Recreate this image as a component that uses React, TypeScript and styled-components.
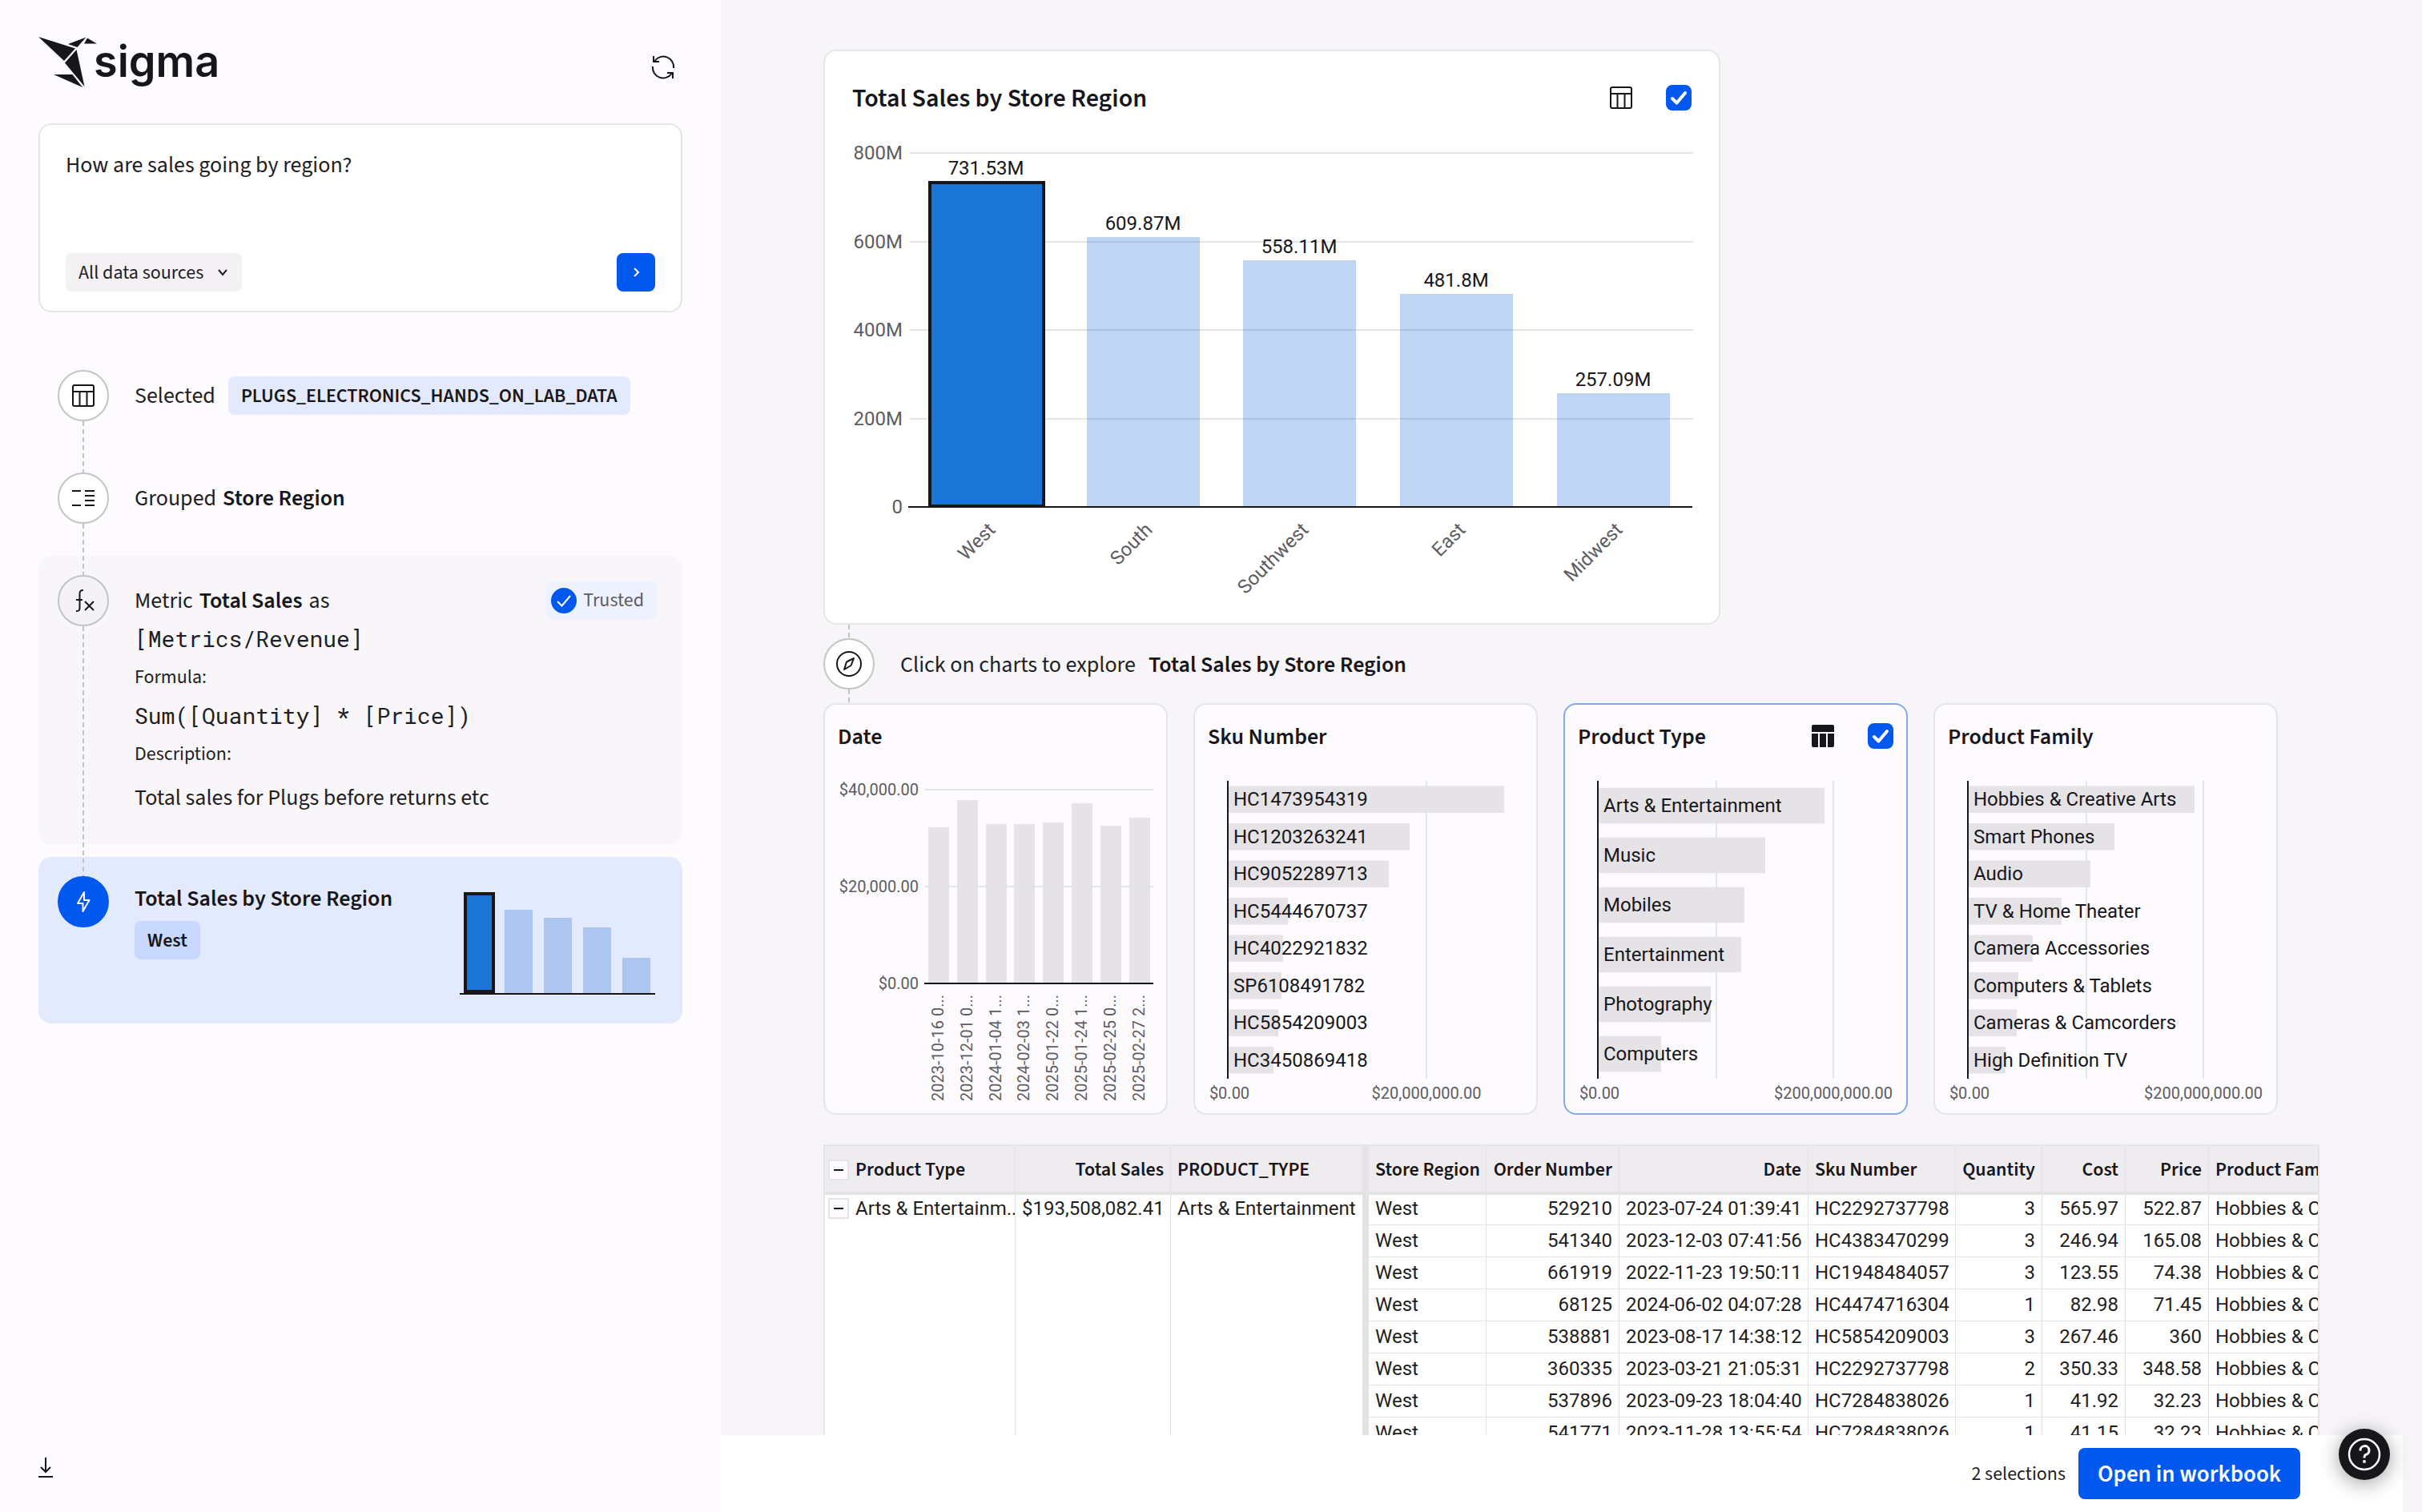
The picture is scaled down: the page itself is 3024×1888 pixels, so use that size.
import React from 'react';
import styled, { createGlobalStyle, css } from 'styled-components';

const color = {
  ink: '#17161a',
  text: '#1f1e22',
  muted: '#5d5c61',
  line: '#e5e4e7',
  rail: '#c4c3c6',
  blue: '#0058ee',
  bar: '#1b75d6',
  barMuted: '#1e69d4',
  sidebar: '#fdfbfe',
  canvas: '#f7f5f8',
};

const ui = '"Source Sans 3", "Noto Sans CJK SC", "Noto Sans", sans-serif';
const data = 'Roboto, "Liberation Sans", sans-serif';
const mono = '"Roboto Mono", "Liberation Mono", monospace';

const GlobalStyle = createGlobalStyle`
  * { box-sizing: border-box; }
  body { margin: 0; background: ${color.canvas}; color: ${color.text}; font-family: ${ui}; font-size: 28px; }
  button, select, textarea, input { font: inherit; color: inherit; margin: 0; }
  p, h1, h2, h3, ol { margin: 0; padding: 0; font-weight: 400; }
  svg { display: block; flex: none; }
`;

/* ---------- page frame ---------- */

const Page = styled.div`
  display: flex;
  height: 100vh;
  overflow: hidden;
`;

const Sidebar = styled.aside`
  display: flex;
  flex-direction: column;
  flex: 0 0 900px;
  padding: 44px 48px 40px;
  background: ${color.sidebar};
`;

const Main = styled.main`
  display: flex;
  flex: 1;
  flex-direction: column;
  min-width: 0;
`;

const Canvas = styled.div`
  flex: 1;
  min-height: 0;
  padding: 62px 128px 0;
  overflow-x: hidden;
  overflow-y: auto;
  scrollbar-width: none;
`;

const Footer = styled.footer`
  display: flex;
  flex: none;
  align-items: center;
  justify-content: flex-end;
  gap: 16px;
  height: 96px;
  margin-right: 24px;
  padding-right: 128px;
  background: #ffffff;
  font-size: 24px;
`;

const PrimaryButton = styled.button`
  height: 64px;
  padding: 2px 24px 0;
  border: 0;
  border-radius: 8px;
  background: ${color.blue};
  color: #ffffff;
  font-size: 29px;
  font-weight: 600;
  line-height: 36px;
`;

const HelpButton = styled.button`
  position: fixed;
  right: 40px;
  bottom: 40px;
  display: grid;
  place-items: center;
  width: 64px;
  height: 64px;
  padding: 0;
  border: 0;
  border-radius: 50%;
  background: ${color.ink};
  color: #ffffff;
  box-shadow: 0 4px 24px rgba(20, 18, 24, 0.4);
`;

/* ---------- sidebar ---------- */

const SidebarHeader = styled.header`
  display: flex;
  align-items: flex-end;
  justify-content: space-between;
  height: 70px;
  margin-bottom: 40px;
`;

const IconButton = styled.button<{ $w: number; $h: number }>`
  display: grid;
  place-items: center;
  width: ${(p) => p.$w}px;
  height: ${(p) => p.$h}px;
  padding: 0;
  border: 0;
  background: none;
  color: ${color.ink};
`;

const Prompt = styled.form`
  display: flex;
  flex-direction: column;
  height: 236px;
  padding: 32px 32px 24px;
  border: 2px solid ${color.line};
  border-radius: 16px;
  background: #ffffff;
`;

const PromptInput = styled.textarea`
  flex: 1;
  width: 100%;
  padding: 0;
  border: 0;
  outline: 0;
  resize: none;
  background: none;
  line-height: 36px;
`;

const PromptActions = styled.div`
  display: flex;
  align-items: center;
  justify-content: space-between;
`;

const SourcePicker = styled.label`
  position: relative;
  display: flex;

  svg {
    position: absolute;
    right: 16px;
    top: 16px;
    pointer-events: none;
  }
`;

const SourceSelect = styled.select`
  width: 220px;
  height: 48px;
  padding: 2px 40px 0 16px;
  border: 0;
  border-radius: 8px;
  appearance: none;
  background: #f3f1f4;
  font-size: 24px;
  line-height: 32px;
`;

const SendButton = styled.button`
  display: grid;
  place-items: center;
  width: 48px;
  height: 48px;
  padding: 0;
  border: 0;
  border-radius: 8px;
  background: ${color.blue};
  color: #ffffff;
`;

const Steps = styled.ol`
  display: flex;
  flex-direction: column;
  gap: 16px;
  margin-top: 48px;
  list-style: none;
`;

const Step = styled.li<{ $tone?: string }>`
  display: flex;
  gap: 32px;
  padding: 24px 32px 24px 24px;
  border-radius: 16px;
  background: ${(p) => p.$tone ?? 'transparent'};
`;

const Rail = styled.div`
  display: flex;
  flex: none;
  flex-direction: column;
  align-items: center;
  width: 64px;
`;

const Dashes = css`
  width: 2px;
  background: repeating-linear-gradient(${color.rail} 0 6px, transparent 6px 10px);
`;

const Connector = styled.span`
  ${Dashes}
  position: relative;
  z-index: 1;
  flex: 1;
  margin-bottom: -64px;
`;

const Badge = styled.span<{ $fill?: string; $solid?: boolean }>`
  display: grid;
  flex: none;
  place-items: center;
  width: 64px;
  height: 64px;
  border: 2px solid ${(p) => (p.$solid ? color.blue : color.rail)};
  border-radius: 50%;
  background: ${(p) => (p.$solid ? color.blue : p.$fill ?? '#ffffff')};
  color: ${(p) => (p.$solid ? '#ffffff' : color.ink)};
`;

const StepLine = styled.p<{ $tight?: boolean }>`
  display: flex;
  align-items: center;
  gap: ${(p) => (p.$tight ? 8 : 16)}px;
  height: 64px;
  line-height: 36px;
`;

const Strong = styled.strong`
  color: ${color.ink};
  font-weight: 600;
`;

const Chip = styled.span<{ $deep?: boolean }>`
  height: 48px;
  padding: 1px 16px 0;
  border-radius: 8px;
  background: ${(p) => (p.$deep ? '#c9d8ff' : '#e4eafe')};
  color: ${color.ink};
  font-size: 24px;
  font-weight: 600;
  line-height: 48px;
`;

const Metric = styled.div`
  display: flex;
  flex: 1;
  flex-direction: column;
  padding-top: 8px;
  line-height: 48px;
`;

const MetricHead = styled.div`
  display: flex;
  align-items: center;
  justify-content: space-between;
`;

const MetricName = styled.p`
  display: flex;
  gap: 8px;
`;

const Trusted = styled.span`
  display: flex;
  align-items: center;
  gap: 8px;
  height: 48px;
  padding: 0 16px 0 6px;
  border-radius: 8px;
  background: #eef2ff;
  color: ${color.muted};
  font-size: 24px;
`;

const Code = styled.code`
  font-family: ${mono};
  font-size: 28px;
`;

const FieldLabel = styled.span`
  font-size: 24px;
`;

const Description = styled.p`
  margin: 12px 0 16px;
  line-height: 36px;
`;

const ResultText = styled.div`
  display: flex;
  flex: 1;
  flex-direction: column;
  align-items: flex-start;
`;

const ResultTitle = styled.h3`
  color: ${color.ink};
  font-size: 28px;
  font-weight: 600;
  line-height: 56px;
`;

const ResultChart = styled.div`
  padding: 20px 2px 12px 0;
`;

const SidebarFooter = styled.div`
  display: flex;
  margin-top: auto;
`;

/* ---------- charts ---------- */

const MainCard = styled.section`
  max-width: 1120px;
  border: 2px solid ${color.line};
  border-radius: 16px;
  background: #ffffff;
`;

const MainCardHeader = styled.header`
  display: flex;
  align-items: center;
  justify-content: space-between;
  height: 96px;
  padding: 20px 34px 0;
`;

const MainTitle = styled.h1`
  padding-top: 2px;
  color: ${color.ink};
  font-size: 32px;
  font-weight: 600;
  line-height: 36px;
`;

const CardTools = styled.div`
  display: flex;
  align-items: center;
  gap: 42px;
`;

const Check = styled.label`
  position: relative;
  display: grid;
  place-items: center;
  width: 32px;
  height: 32px;

  svg {
    position: absolute;
    pointer-events: none;
  }
`;

const CheckInput = styled.input`
  width: 32px;
  height: 32px;
  border: 2px solid ${color.rail};
  border-radius: 8px;
  appearance: none;

  &:checked {
    border-color: ${color.blue};
    background: ${color.blue};
  }
`;

const Chart = styled.svg`
  width: 100%;
  height: auto;
`;

const Label = styled.text<{ $size?: number; $strong?: boolean }>`
  fill: ${(p) => (p.$strong ? color.ink : color.muted)};
  font-family: ${data};
  font-size: ${(p) => p.$size ?? 24}px;
`;

const Explore = styled.div`
  display: flex;
  align-items: center;
  gap: 32px;
  line-height: 36px;
`;

const ExploreRail = styled.div`
  display: flex;
  flex-direction: column;
  align-items: center;
  height: 98px;
`;

const ShortConnector = styled.span`
  ${Dashes}
  flex: 1;
`;

const ExploreText = styled.p`
  display: flex;
  gap: 16px;
  padding-top: 2px;
`;

const CardGrid = styled.div`
  display: grid;
  grid-template-columns: repeat(4, minmax(0, 430px));
  gap: 32px;
`;

const SmallCard = styled.section<{ $selected?: boolean }>`
  border: 2px solid ${(p) => (p.$selected ? '#7cacf0' : color.line)};
  border-radius: 16px;
  background: ${color.sidebar};
`;

const SmallCardHeader = styled.header`
  display: flex;
  align-items: center;
  justify-content: space-between;
  height: 78px;
  padding: 0 16px;
`;

const SmallTitle = styled.h2`
  padding-top: 2px;
  color: ${color.ink};
  font-size: 28px;
  font-weight: 600;
  line-height: 36px;
`;

/* ---------- table ---------- */

const TableFrame = styled.div`
  margin-top: 37px;
  overflow: hidden;
  border: 2px solid ${color.line};
  border-bottom: 0;
  background: #ffffff;
`;

const Table = styled.table`
  width: 1968px;
  border-collapse: separate;
  border-spacing: 0;
  table-layout: fixed;
  font-family: ${data};
  font-size: 24px;
`;

const Head = styled.th<{ $right?: boolean; $divider?: boolean }>`
  height: 61px;
  padding: 2px 8px 0;
  border-right: ${(p) => (p.$divider ? 8 : 1)}px solid #e4e2e5;
  border-bottom: 4px solid #e4e2e5;
  background: #eeecef;
  color: ${color.ink};
  font-family: ${ui};
  font-size: 24px;
  font-weight: 600;
  line-height: 32px;
  text-align: ${(p) => (p.$right ? 'right' : 'left')};
  white-space: nowrap;
`;

const Row = styled.tr<{ $first?: boolean }>`
  height: ${(p) => (p.$first ? 38 : 40)}px;
`;

const Cell = styled.td<{ $right?: boolean; $divider?: boolean; $group?: boolean }>`
  overflow: hidden;
  padding: 0 8px 3px;
  border-right: ${(p) => (p.$divider ? 8 : 1)}px solid #e4e2e5;
  border-bottom: ${(p) => (p.$group ? 0 : 1)}px solid ${color.line};
  line-height: 34px;
  text-align: ${(p) => (p.$right ? 'right' : 'left')};
  vertical-align: ${(p) => (p.$group ? 'top' : 'bottom')};
  white-space: nowrap;
`;

const Grouped = styled.span`
  display: flex;
  align-items: center;
  gap: 8px;
  margin: 0 -8px 0 -4px;
`;

const Toggle = styled.button`
  display: grid;
  flex: none;
  place-items: center;
  width: 26px;
  height: 26px;
  padding: 0;
  border: 2px solid ${color.line};
  background: ${color.sidebar};

  &::before {
    content: '';
    width: 12px;
    height: 2px;
    background: ${color.ink};
  }
`;

/* ---------- icons ---------- */

const stroke = { fill: 'none', stroke: 'currentColor', strokeWidth: 2 } as const;

const Logo = () => (
  <svg width="240" height="70" viewBox="0 0 240 70" role="img" aria-label="sigma">
    <g fill={color.ink}>
      <path d="M0 2 46 16.500 32 32Z" />
      <path d="M37 11 59.500 2.500 48.500 15Z" />
      <path d="M61 3.500 73 10.500H57Z" />
      <path d="M47.500 18 57.500 64 33 34.500Z" />
      <path d="M19 49H42.500L55 65Z" />
    </g>
    <text x="69" y="52" fill={color.ink} fontFamily="Inter, sans-serif" fontSize="54" fontWeight="600">sigma</text>
  </svg>
);

const RefreshIcon = () => (
  <svg width="32" height="32" viewBox="0 0 32 32" {...stroke}>
    <path d="M29 17A13 13 0 0 0 5.500 8M4 2V9H11" />
    <path d="M3 15A13 13 0 0 0 26.500 24M28 30V23H21" />
  </svg>
);

const TableIcon = () => (
  <svg width="28" height="28" viewBox="0 0 28 28" {...stroke}>
    <rect x="1" y="1" width="26" height="26" rx="2" />
    <path d="M1 9H27M9.500 9V27M18.500 9V27" />
  </svg>
);

const SolidTableIcon = () => (
  <svg width="28" height="28" viewBox="0 0 28 28" fill="currentColor">
    <path d="M2 0H26A2 2 0 0 1 28 2V9H0V2A2 2 0 0 1 2 0Z" />
    <path d="M0 11H8V28H2A2 2 0 0 1 0 26ZM10 11H18V28H10ZM20 11H28V26A2 2 0 0 1 26 28H20Z" />
  </svg>
);

const GroupIcon = () => (
  <svg width="32" height="32" viewBox="0 0 32 32" {...stroke}>
    <path d="M2 7H13M2 25H13M18 7H30M18 13H30M18 19H30M18 25H30" />
  </svg>
);

const FunctionIcon = () => (
  <svg width="32" height="32" viewBox="0 0 32 32" {...stroke}>
    <path d="M16 3C12 2.500 11.500 5 11.500 8V24C11.500 27.500 11 29.500 7 29M7 15H15M18 17 29 28M29 17 18 28" />
  </svg>
);

const BoltIcon = () => (
  <svg width="32" height="32" viewBox="0 0 32 32" {...stroke}>
    <path d="M17 4 9 18H15.500V28L23.500 14H17Z" strokeLinejoin="round" />
  </svg>
);

const CompassIcon = () => (
  <svg width="36" height="36" viewBox="0 0 36 36" {...stroke}>
    <circle cx="18" cy="18" r="15" />
    <path d="M24 11 15 15.500 12 25 20.500 20Z" strokeLinejoin="round" />
  </svg>
);

const TickIcon = () => (
  <svg width="22" height="22" viewBox="0 0 22 22" fill="none" stroke="#ffffff" strokeWidth="4">
    <path d="M3 12 8.500 17.500 19 5" strokeLinecap="round" strokeLinejoin="round" />
  </svg>
);

const TrustedIcon = () => (
  <svg width="32" height="32" viewBox="0 0 32 32">
    <circle cx="16" cy="16" r="16" fill={color.blue} />
    <path d="M8 17 13.500 22.500 24 10" fill="none" stroke="#ffffff" strokeWidth="2" />
  </svg>
);

const ChevronDown = () => (
  <svg width="16" height="16" viewBox="0 0 16 16" {...stroke}>
    <path d="M3 5 8 11 13 5" />
  </svg>
);

const ChevronRight = () => (
  <svg width="16" height="16" viewBox="0 0 16 16" {...stroke}>
    <path d="M6 3 11 8 6 13" />
  </svg>
);

const DownloadIcon = () => (
  <svg width="18" height="28" viewBox="0 0 18 28" {...stroke}>
    <path d="M9 2V20M3 14 9 20 15 14M0 26H18" />
  </svg>
);

const HelpIcon = () => (
  <svg width="42" height="42" viewBox="0 0 42 42" fill="none" stroke="currentColor" strokeWidth="2.500">
    <circle cx="21" cy="21" r="19" />
    <path d="M16 16.500A5.500 5.500 0 1 1 22.500 21.500C21.500 22 21 23 21 25.500" strokeWidth="3" />
    <circle cx="21" cy="30" r="2" fill="currentColor" stroke="none" />
  </svg>
);

/* ---------- chart components ---------- */

const regions = [
  { name: 'West', value: 731.53, label: '731.53M', mini: 126 },
  { name: 'South', value: 609.87, label: '609.87M', mini: 104 },
  { name: 'Southwest', value: 558.11, label: '558.11M', mini: 94 },
  { name: 'East', value: 481.8, label: '481.8M', mini: 82 },
  { name: 'Midwest', value: 257.09, label: '257.09M', mini: 44 },
];

function RegionChart() {
  const bottom = 473;
  const scale = 442 / 800;
  return (
    <Chart viewBox="0 0 1116 618" role="img" aria-label="Total sales by store region">
      {[800, 600, 400, 200, 0].map((t) => (
        <g key={t}>
          {t > 0 && <rect x={106} y={Math.round(bottom - 1 - t * scale)} width={978} height={2} fill={color.line} />}
          <Label x={97} y={bottom + 8 - t * scale} textAnchor="end">{t ? `${t}M` : '0'}</Label>
        </g>
      ))}
      {regions.map((r, i) => {
        const center = Math.round(202 + i * 195.7);
        const top = Math.round(bottom - r.value * scale);
        return (
          <g key={r.name}>
            {i === 0 ? (
              <rect x={center - 71} y={top - 1} width={142} height={bottom - top} fill={color.bar} stroke={color.ink} strokeWidth={4} />
            ) : (
              <rect x={center - 71} y={top} width={141} height={bottom - top} fill={color.barMuted} fillOpacity={0.28} />
            )}
            <Label $strong x={center - 1} y={top - (i === 0 ? 11 : 9)} textAnchor="middle">{r.label}</Label>
            <Label textAnchor="end" transform={`translate(${center + 12} 503) rotate(-45)`}>{r.name}</Label>
          </g>
        );
      })}
      <rect x={104} y={bottom - 1} width={979} height={2} fill={color.ink} />
    </Chart>
  );
}

function MiniChart() {
  return (
    <svg width="244" height="128" viewBox="0 0 244 128" role="img" aria-label="Total sales by store region, small">
      {regions.map((r, i) =>
        i === 0 ? (
          <rect key={r.name} x={7} y={2} width={35} height={122} fill={color.bar} stroke={color.ink} strokeWidth={4} />
        ) : (
          <rect key={r.name} x={7 + i * 49} y={126 - r.mini} width={35} height={r.mini} fill="#adc5f1" />
        ),
      )}
      <rect x={0} y={126} width={244} height={2} fill={color.ink} />
    </svg>
  );
}

const dates = [
  ['2023-10-16 0...', 195],
  ['2023-12-01 0...', 229],
  ['2024-01-04 1...', 199],
  ['2024-02-03 1...', 199],
  ['2025-01-22 0...', 201],
  ['2025-01-24 1...', 225],
  ['2025-02-25 0...', 197],
  ['2025-02-27 2...', 207],
] as const;

function DateChart() {
  const bottom = 270;
  return (
    <Chart viewBox="0 0 426 432" role="img" aria-label="Sales by date">
      {([['$40,000.00', 28], ['$20,000.00', 149], ['$0.00', 270]] as const).map(([t, y]) => (
        <g key={t}>
          {y < bottom && <rect x={125} y={y - 1} width={285} height={2} fill={color.line} />}
          <Label $size={20} x={117} y={y + 7} textAnchor="end">{t}</Label>
        </g>
      ))}
      {dates.map(([name, h], i) => {
        const x = Math.round(129 + i * 35.8);
        return (
          <g key={name}>
            <rect x={x} y={bottom - h} width={26} height={h} fill="#e5e3e6" />
            <Label $size={20} textAnchor="end" transform={`translate(${x + 19} 284) rotate(-90)`}>{name}</Label>
          </g>
        );
      })}
      <rect x={124} y={bottom - 1} width={286} height={2} fill={color.ink} />
    </Chart>
  );
}

type Bars = { label: string; rows: [string, number][]; grid: number[]; max: string; maxX: number };

function BarList({ label, rows, grid, max, maxX }: Bars) {
  const top = 17;
  const height = 372;
  const band = height / rows.length;
  return (
    <Chart viewBox="0 0 426 432" role="img" aria-label={label}>
      {grid.map((x) => (
        <rect key={x} x={x - 1} y={top} width={2} height={height} fill={color.line} />
      ))}
      {rows.map(([name, w], i) => (
        <g key={name}>
          <rect x={42} y={top + band * (i + 0.14)} width={w} height={band * 0.72} fill="#e5e3e6" />
          <Label $strong x={48} y={top + band * (i + 0.5) + 8}>{name}</Label>
        </g>
      ))}
      <rect x={40} y={top} width={2} height={height} fill={color.ink} />
      <Label $size={20} x={43} y={414} textAnchor="middle">$0.00</Label>
      <Label $size={20} x={maxX} y={414} textAnchor="middle">{max}</Label>
    </Chart>
  );
}

const sku: [string, number][] = [
  ['HC1473954319', 344], ['HC1203263241', 226], ['HC9052289713', 200], ['HC5444670737', 74],
  ['HC4022921832', 68], ['SP6108491782', 66], ['HC5854209003', 62], ['HC3450869418', 56],
];
const types: [string, number][] = [
  ['Arts & Entertainment', 282], ['Music', 208], ['Mobiles', 182],
  ['Entertainment', 178], ['Photography', 140], ['Computers', 78],
];
const families: [string, number][] = [
  ['Hobbies & Creative Arts', 282], ['Smart Phones', 182], ['Audio', 152], ['TV & Home Theater', 116],
  ['Camera Accessories', 80], ['Computers & Tablets', 62], ['Cameras & Camcorders', 60], ['High Definition TV', 46],
];

function Checkbox({ name }: { name: string }) {
  return (
    <Check>
      <CheckInput type="checkbox" defaultChecked aria-label={name} />
      <TickIcon />
    </Check>
  );
}

/* ---------- table data ---------- */

const columns: { name: string; width: number; right?: boolean; divider?: boolean }[] = [
  { name: 'Product Type', width: 238 },
  { name: 'Total Sales', width: 194, right: true },
  { name: 'PRODUCT_TYPE', width: 247, divider: true },
  { name: 'Store Region', width: 147 },
  { name: 'Order Number', width: 166, right: true },
  { name: 'Date', width: 236, right: true },
  { name: 'Sku Number', width: 184 },
  { name: 'Quantity', width: 108, right: true },
  { name: 'Cost', width: 104, right: true },
  { name: 'Price', width: 104, right: true },
  { name: 'Product Family', width: 240 },
];

const orders = [
  ['West', '529210', '2023-07-24 01:39:41', 'HC2292737798', '3', '565.97', '522.87'],
  ['West', '541340', '2023-12-03 07:41:56', 'HC4383470299', '3', '246.94', '165.08'],
  ['West', '661919', '2022-11-23 19:50:11', 'HC1948484057', '3', '123.55', '74.38'],
  ['West', '68125', '2024-06-02 04:07:28', 'HC4474716304', '1', '82.98', '71.45'],
  ['West', '538881', '2023-08-17 14:38:12', 'HC5854209003', '3', '267.46', '360'],
  ['West', '360335', '2023-03-21 21:05:31', 'HC2292737798', '2', '350.33', '348.58'],
  ['West', '537896', '2023-09-23 18:04:40', 'HC7284838026', '1', '41.92', '32.23'],
  ['West', '541771', '2023-11-28 13:55:54', 'HC7284838026', '1', '41.15', '32.23'],
];

function OrdersTable() {
  return (
    <TableFrame>
      <Table>
        <colgroup>
          {columns.map((c) => <col key={c.name} width={c.width} />)}
        </colgroup>
        <thead>
          <tr>
            {columns.map((c, i) => (
              <Head key={c.name} scope="col" $right={c.right} $divider={c.divider}>
                {i === 0 ? <Grouped><Toggle type="button" aria-label="Collapse all" />{c.name}</Grouped> : c.name}
              </Head>
            ))}
          </tr>
        </thead>
        <tbody>
          {orders.map((order, r) => (
            <Row key={order[1]} $first={r === 0}>
              {r === 0 && (
                <>
                  <Cell $group rowSpan={orders.length}>
                    <Grouped><Toggle type="button" aria-label="Collapse group" />Arts &amp; Entertainm..</Grouped>
                  </Cell>
                  <Cell $group $right rowSpan={orders.length}>$193,508,082.41</Cell>
                  <Cell $group $divider rowSpan={orders.length}>Arts &amp; Entertainment</Cell>
                </>
              )}
              {order.map((value, c) => (
                <Cell key={c} $right={columns[c + 3].right}>{value}</Cell>
              ))}
              <Cell>Hobbies &amp; Creative Arts</Cell>
            </Row>
          ))}
        </tbody>
      </Table>
    </TableFrame>
  );
}

/* ---------- page ---------- */

export default function App() {
  return (
    <Page>
      <GlobalStyle />
      <Sidebar>
        <SidebarHeader>
          <Logo />
          <IconButton type="button" $w={48} $h={60} aria-label="Start over"><RefreshIcon /></IconButton>
        </SidebarHeader>

        <Prompt>
          <PromptInput aria-label="Question" defaultValue="How are sales going by region?" />
          <PromptActions>
            <SourcePicker>
              <SourceSelect aria-label="Data source"><option>All data sources</option></SourceSelect>
              <ChevronDown />
            </SourcePicker>
            <SendButton type="button" aria-label="Ask"><ChevronRight /></SendButton>
          </PromptActions>
        </Prompt>

        <Steps>
          <Step>
            <Rail><Badge><TableIcon /></Badge><Connector /></Rail>
            <StepLine>Selected <Chip>PLUGS_ELECTRONICS_HANDS_ON_LAB_DATA</Chip></StepLine>
          </Step>
          <Step>
            <Rail><Badge><GroupIcon /></Badge><Connector /></Rail>
            <StepLine $tight>Grouped <Strong>Store Region</Strong></StepLine>
          </Step>
          <Step $tone="#f8f6f9">
            <Rail><Badge $fill="#f4f2f5"><FunctionIcon /></Badge><Connector /></Rail>
            <Metric>
              <MetricHead>
                <MetricName>Metric <Strong>Total Sales</Strong> as</MetricName>
                <Trusted><TrustedIcon />Trusted</Trusted>
              </MetricHead>
              <Code>[Metrics/Revenue]</Code>
              <FieldLabel>Formula:</FieldLabel>
              <Code>Sum([Quantity] * [Price])</Code>
              <FieldLabel>Description:</FieldLabel>
              <Description>Total sales for Plugs before returns etc</Description>
            </Metric>
          </Step>
          <Step $tone="#e4eafe">
            <Rail><Badge $solid><BoltIcon /></Badge></Rail>
            <ResultText>
              <ResultTitle>Total Sales by Store Region</ResultTitle>
              <Chip $deep>West</Chip>
            </ResultText>
            <ResultChart><MiniChart /></ResultChart>
          </Step>
        </Steps>

        <SidebarFooter>
          <IconButton type="button" $w={18} $h={32} aria-label="Download"><DownloadIcon /></IconButton>
        </SidebarFooter>
      </Sidebar>

      <Main>
        <Canvas>
          <MainCard>
            <MainCardHeader>
              <MainTitle>Total Sales by Store Region</MainTitle>
              <CardTools>
                <IconButton type="button" $w={28} $h={28} aria-label="Show table"><TableIcon /></IconButton>
                <Checkbox name="Select Total Sales by Store Region" />
              </CardTools>
            </MainCardHeader>
            <RegionChart />
          </MainCard>

          <Explore>
            <ExploreRail>
              <ShortConnector /><Badge><CompassIcon /></Badge><ShortConnector />
            </ExploreRail>
            <ExploreText><span>Click on charts to explore</span><Strong>Total Sales by Store Region</Strong></ExploreText>
          </Explore>

          <CardGrid>
            <SmallCard>
              <SmallCardHeader><SmallTitle>Date</SmallTitle></SmallCardHeader>
              <DateChart />
            </SmallCard>
            <SmallCard>
              <SmallCardHeader><SmallTitle>Sku Number</SmallTitle></SmallCardHeader>
              <BarList label="Sales by SKU" rows={sku} grid={[289]} max="$20,000,000.00" maxX={289} />
            </SmallCard>
            <SmallCard $selected>
              <SmallCardHeader>
                <SmallTitle>Product Type</SmallTitle>
                <CardTools>
                  <IconButton type="button" $w={28} $h={28} aria-label="Hide table"><SolidTableIcon /></IconButton>
                  <Checkbox name="Select Product Type" />
                </CardTools>
              </SmallCardHeader>
              <BarList label="Sales by product type" rows={types} grid={[189, 335]} max="$200,000,000.00" maxX={335} />
            </SmallCard>
            <SmallCard>
              <SmallCardHeader><SmallTitle>Product Family</SmallTitle></SmallCardHeader>
              <BarList label="Sales by product family" rows={families} grid={[189, 335]} max="$200,000,000.00" maxX={335} />
            </SmallCard>
          </CardGrid>

          <OrdersTable />
        </Canvas>

        <Footer>
          <span>2 selections</span>
          <PrimaryButton type="button">Open in workbook</PrimaryButton>
        </Footer>
      </Main>

      <HelpButton type="button" aria-label="Help"><HelpIcon /></HelpButton>
    </Page>
  );
}
